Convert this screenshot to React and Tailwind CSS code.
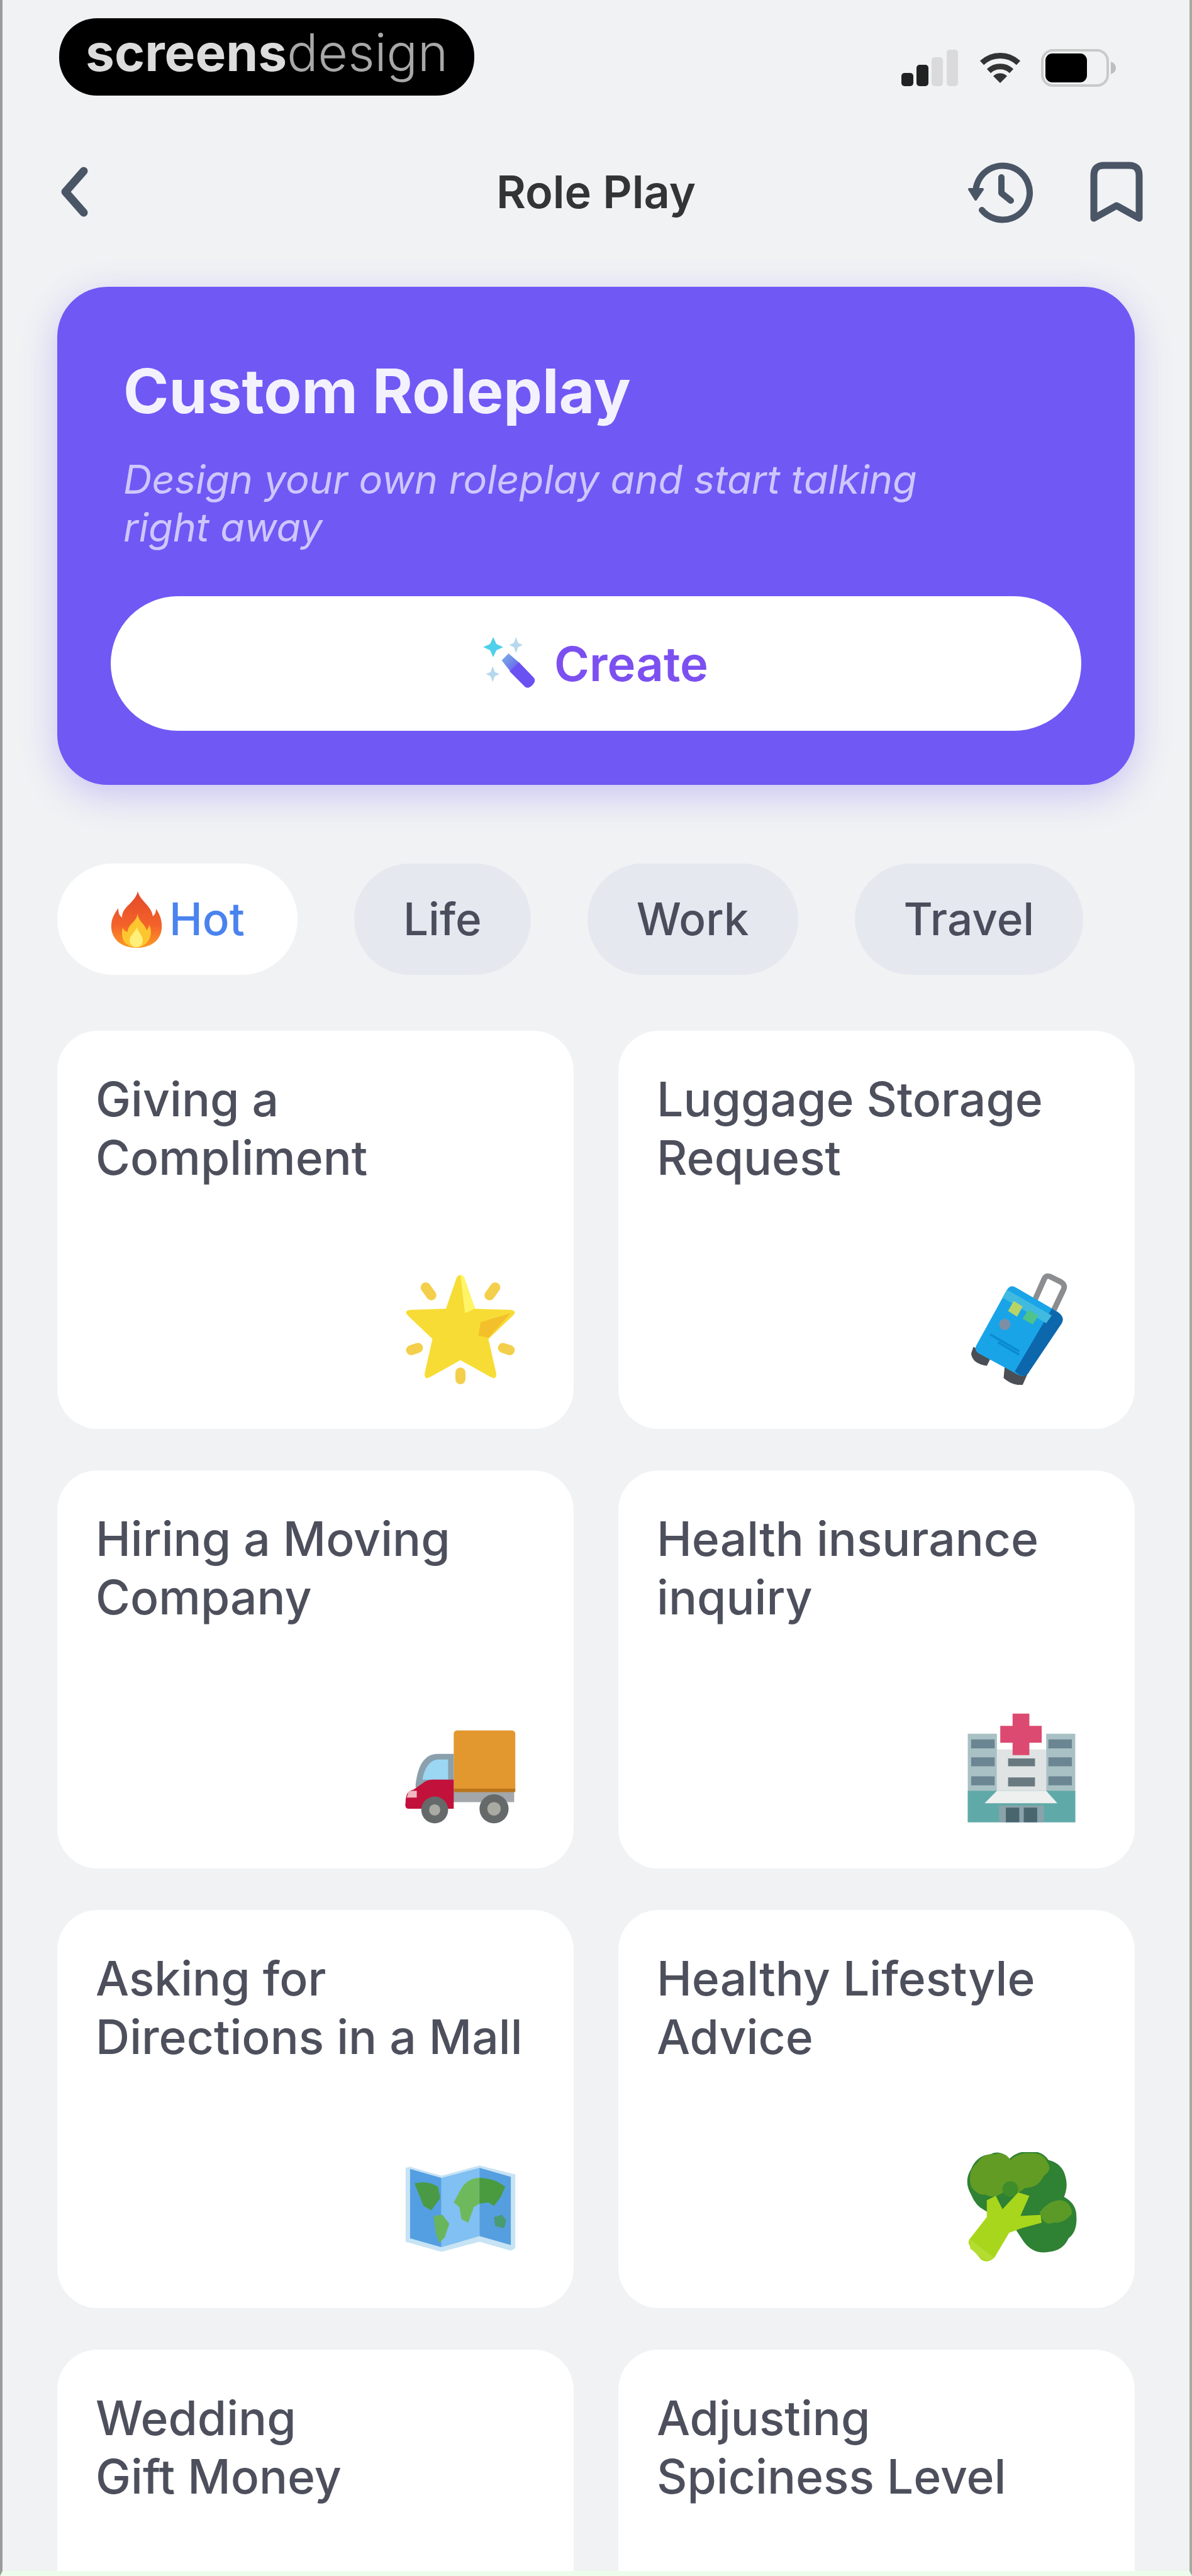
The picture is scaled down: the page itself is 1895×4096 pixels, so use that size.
const INK = "#4a5566";

function BackIcon() {
  return (
    <svg viewBox="0 0 46 84" className="h-[84px] w-[46px]" fill="none" stroke={INK} strokeWidth="13" strokeLinecap="round" strokeLinejoin="round" aria-hidden="true">
      <path d="M38 9 9 42l29 33" />
    </svg>
  );
}

function HistoryIcon() {
  return (
    <svg viewBox="0 0 104 104" className="size-[104px]" fill="none" stroke={INK} strokeWidth="10" strokeLinecap="round" strokeLinejoin="round" aria-hidden="true">
      <path d="M13 53a43 43 0 1 1 10 28" />
      <path d="M54 29v25l15 12" />
      <path d="M3 48h21L13 64z" fill={INK} strokeWidth="4" />
    </svg>
  );
}

function BookmarkIcon() {
  return (
    <svg viewBox="0 0 86 98" className="h-[98px] w-[86px]" fill="none" stroke={INK} strokeWidth="11" strokeLinejoin="round" strokeLinecap="round" aria-hidden="true">
      <path d="M7 91V23Q7 7 23 7h40q16 0 16 16v68L43 71z" />
    </svg>
  );
}

function StatusIcons() {
  return (
    <div className="flex items-center gap-8" aria-hidden="true">
      <svg viewBox="0 0 94 60" className="h-[60px] w-[94px]">
        <rect x="2" y="38" width="19" height="21" rx="5" fill="#222" />
        <rect x="26" y="25" width="19" height="34" rx="5" fill="#222" />
        <rect x="50" y="13" width="18" height="46" rx="5" fill="#d9dad9" />
        <rect x="74" y="1" width="18" height="58" rx="5" fill="#d9dad9" />
      </svg>
      <svg viewBox="0 0 66 52" className="h-[52px] w-[66px]" fill="none" stroke="#333" strokeWidth="9">
        <path d="M4 18a42 42 0 0 1 58 0" />
        <path d="M15 31a26 26 0 0 1 36 0" />
        <path d="M33 50 22 39a16 16 0 0 1 22 0z" fill="#333" stroke="none" />
      </svg>
      <svg viewBox="0 0 120 60" className="h-[60px] w-[120px]">
        <rect x="2" y="2" width="104" height="56" rx="17" fill="none" stroke="#c9cac9" strokeWidth="4" />
        <rect x="7" y="7" width="66" height="46" rx="11" fill="#000" />
        <path d="M111 20q8 3 8 10t-8 10z" fill="#bdbebd" />
      </svg>
    </div>
  );
}

function WandIcon() {
  return (
    <svg viewBox="0 0 100 100" className="size-[84px]" aria-hidden="true">
      <defs>
        <linearGradient id="wand" x1="0" y1="0" x2="1" y2="1">
          <stop offset="0" stopColor="#7fb6e6" />
          <stop offset=".5" stopColor="#6f86ea" />
          <stop offset="1" stopColor="#6a4cf2" />
        </linearGradient>
      </defs>
      <path d="m34 44 13-13 22 19-17 17z" fill="url(#wand)" />
      <path d="m49 65 18-17 28 29q5 6-3 14t-14 3z" fill="#6a52f2" />
      <path d="m18 0 6 13 13 6-13 6-6 13-6-13-13-6 13-6z" fill="#4fd0ea" />
      <path d="m61 0 4 11 9 4-9 4-4 11-4-11-9-4 9-4z" fill="#b5d8ec" />
      <path d="m17 55 4 11 9 4-9 4-4 11-4-11-9-4 9-4z" fill="#b5d8ec" />
    </svg>
  );
}

function FireIcon() {
  return (
    <svg viewBox="0 0 84 92" className="h-[92px] w-[84px]" aria-hidden="true">
      <defs>
        <linearGradient id="flame" x1="0" y1="0" x2="0" y2="1">
          <stop offset="0" stopColor="#e2492a" />
          <stop offset=".6" stopColor="#f4622a" />
          <stop offset="1" stopColor="#fb9a26" />
        </linearGradient>
      </defs>
      <path d="M44 1c3 15 22 23 24 40 4-3 5-7 5-12 7 10 10 20 9 32C80 80 64 91 42 91S4 80 2 60C1 47 6 38 13 28c0 8 2 12 6 15C19 25 40 20 44 1z" fill="url(#flame)" />
      <path d="M44 36c0 13 12 17 14 27 3-3 4-6 4-9 8 15-1 36-20 36S16 76 20 59c2 4 4 6 8 7 0-13 14-15 16-30z" fill="#fdc62f" />
      <path d="M43 58c1 8 9 13 9 21 0 7-4 11-10 11s-11-4-11-11 8-12 12-21z" fill="#fff07a" />
    </svg>
  );
}

function StarArt() {
  return (
    <>
      <path d="M50 2q3 0 4 4l9 26 32 1q6 1 2 5L75 59l7 31q0 6-5 3L50 78 23 93q-5 3-5-3l7-31L3 38q-4-4 2-5l32-1 9-26q1-4 4-4z" fill="#f7dc35" />
      <path d="M50 2q3 0 4 4l9 26-9 4z" fill="#fff566" />
      <path d="m68 44 27-8-20 22-9-2z" fill="#f3c02b" />
      <g stroke="#f4cf4b" strokeWidth="9" strokeLinecap="round">
        <path d="m19 13 5 7M81 13l-5 7M6 69l6-2M94 69l-6-2M50 89v6" />
      </g>
    </>
  );
}

function LuggageArt() {
  return (
    <>
      <path d="m62 24 8-18q2-5 7-2l8 4q5 3 2 8l-10 21" fill="none" stroke="#8b8d90" strokeWidth="5" />
      <path d="m7 66 16 9-4 8q-13-2-14-11zM35 83l20 8-4 9q-9 1-17-6z" fill="#4b4f55" />
      <path d="M37 15q3-5 8-2l36 21q7 4 4 10L56 88q-3 6-9 3L12 72q-5-3-2-8z" fill="#1aa4e8" />
      <path d="m77 32 5 3q7 4 4 10L57 88q-3 6-9 3l-4-3z" fill="#0d67ac" />
      <path d="m37 15 40 23-5 7-39-23z" fill="#40badf" />
      <path d="m43 25 8 5-5 9-8-5z" fill="#b9d466" />
      <path d="m56 33 9 5-5 8-9-5z" fill="#4fc389" />
      <circle cx="35" cy="46" r="5" fill="#7d8fa5" />
      <path d="m22 55 26 15M29 62l19 11" stroke="#0a8bd0" strokeWidth="2" />
    </>
  );
}

function TruckArt() {
  return (
    <>
      <path d="M42 70h56v10H42z" fill="#a3a6aa" />
      <rect x="44" y="16" width="55" height="55" rx="3" fill="#e3972f" />
      <path d="M44 68h55v3H44z" fill="#b9751f" />
      <path d="M10 64q2-17 9-23 4-4 11-4h14v30H10z" fill="#8aa0ac" />
      <path d="M16 60q2-11 7-15 3-3 8-3h8v18z" fill="#9bd7f2" />
      <path d="M18 62q3-2 7-2h19v26H3q-3-1-2-6 0-10 7-11z" fill="#c2113b" />
      <path d="M4 70h7v6H2z" fill="#f0b9c2" />
      <g fill="#66696a">
        <circle cx="27" cy="87" r="12" />
        <circle cx="80" cy="86" r="13" />
      </g>
      <g fill="#a9aba3">
        <circle cx="27" cy="87" r="5" />
        <circle cx="80" cy="86" r="6" />
      </g>
    </>
  );
}

function HospitalArt() {
  return (
    <>
      <path d="M2 19h26v79H2zM72 19h26v79H72z" fill="#a9c0c4" />
      <path d="M28 33h44v65H28z" fill="#dfe3e3" />
      <path d="M2 70h96v28H2z" fill="#5faaa8" />
      <path d="M5 24h21v8H5zM5 40h21v8H5zM5 57h21v8H5zM74 24h21v8H74zM74 40h21v8H74zM74 57h21v8H74z" fill="#6b8593" />
      <path d="M38 41h24v7H38zM38 58h24v8H38z" fill="#687a80" />
      <path d="M28 70h44l10 11H17z" fill="#eef0ef" />
      <path d="M30 83h40v15H30z" fill="#8aa3aa" />
      <path d="M36 85h12v13H36zM52 85h12v13H52z" fill="#49666f" />
      <path d="M42 1h15v11h11v15H57v11H42V27H31V12h11z" fill="#dd4a71" />
    </>
  );
}

function MapArt() {
  return (
    <>
      <path d="m1 14 4-1 28 8 34-9 32 8v66l-4 2-28-8-34 9-32-9z" fill="#c7e3f4" />
      <path d="m5 15 28 8v62L5 77z" fill="#549fe2" />
      <path d="m33 23 34-9v61l-34 10z" fill="#80c0f2" />
      <path d="m67 14 28 8v61l-28-8z" fill="#559fe0" />
      <path d="M9 28q12-3 21 3l2 10-8 11-7-4z" fill="#4a9a45" />
      <path d="m26 57 8-1 6 8-4 12-5 5-3-9z" fill="#68b55c" />
      <path d="M51 32q6-9 16-9v23l-5 3-5 14-6-3-2-11-5-4z" fill="#6fb95d" />
      <path d="M67 23q13 0 23 8l-4 9-6 8-5-3-8 1z" fill="#4a9a40" />
      <path d="m80 58 7-2 4 5-2 7-8-2z" fill="#4a9a72" />
    </>
  );
}

function BroccoliArt() {
  return (
    <>
      <path d="M5 38Q-2 26 5 15 10 3 22 2q9-5 17 4 9-8 18-6 11-2 17 7 12 3 15 14 3 9-1 19 11 6 11 17 1 14-7 20-5 11-17 12-14 3-23-9l-8-12-27-16Q9 48 5 38z" fill="#2f8133" />
      <path d="M5 31Q1 17 11 9q5-8 15-7 9-3 14 5 8-7 17-6 12-1 16 8 5 7-3 12-5 11-17 11-8 8-17 2-10 9-18 4-7 1-13-7z" fill="#629c24" />
      <path d="M66 54q9-12 20-11 9 3 9 12-7 9-17 8-8 4-12-9z" fill="#5b9a27" />
      <circle cx="40" cy="33" r="7" fill="#3f8c2b" />
      <path d="m19 43 8-4 6 12 14-15 10 3-8 18 18-1 1 7-18 5-11 4-13 22q-6 6-12 2L4 84q-3-4 1-8l14-18z" fill="#a8d61c" />
      <path d="m4 78 21 16q-5 5-10 1L4 86z" fill="#b5dc30" />
    </>
  );
}

function EmojiArt({ children }) {
  return (
    <svg viewBox="0 0 100 100" className="size-[178px] self-end" aria-hidden="true">
      {children}
    </svg>
  );
}

const tabs = [
  { label: "Hot", active: true },
  { label: "Life" },
  { label: "Work" },
  { label: "Travel" },
];

const scenarios = [
  { lines: ["Giving a", "Compliment"], art: <StarArt /> },
  { lines: ["Luggage Storage", "Request"], art: <LuggageArt /> },
  { lines: ["Hiring a Moving", "Company"], art: <TruckArt /> },
  { lines: ["Health insurance", "inquiry"], art: <HospitalArt /> },
  { lines: ["Asking for", "Directions in a Mall"], art: <MapArt /> },
  { lines: ["Healthy Lifestyle", "Advice"], art: <BroccoliArt /> },
  { lines: ["Wedding", "Gift Money"], art: null },
  { lines: ["Adjusting", "Spiciness Level"], art: null },
];

function ScenarioCard({ lines, art }) {
  return (
    <button type="button" className="flex min-h-[633px] flex-col justify-between rounded-[64px] bg-white pt-[62px] pr-[91px] pb-[70px] pl-[61px] text-left text-[75px] leading-[93px] font-medium whitespace-nowrap text-[#4d505c]">
      <span className="w-0">
        {lines[0]}
        <br />
        {lines[1]}
      </span>
      {art && <EmojiArt>{art}</EmojiArt>}
    </button>
  );
}

export default function App() {
  return (
    <div className="flex h-screen flex-col overflow-hidden border-r-4 border-b-8 border-l-4 border-r-[#a3aba1] border-b-[#edfdec] border-l-[#9b9c9c] bg-[#f0f2f4] font-['Inter',sans-serif]">
      <div className="flex shrink-0 items-end justify-between pt-[29px] pr-[116px] pl-[90px]">
        <div className="flex h-[123px] items-center rounded-[60px] bg-black px-[42px] pb-[14px] text-[82px] leading-none text-[#dcdcdc]">
          <span className="font-bold">screens</span>
          <span className="font-light text-[#a8a8a8]">design</span>
        </div>
        <div className="pb-[14px]">
          <StatusIcons />
        </div>
      </div>

      <header className="mt-[101px] grid shrink-0 grid-cols-[1fr_auto_1fr] items-center px-[73px]">
        <button type="button" aria-label="Back" className="ml-[18px] justify-self-start">
          <BackIcon />
        </button>
        <h1 className="text-[72px] leading-[104px] font-semibold text-[#333436]">Role Play</h1>
        <div className="flex items-center gap-[90px] justify-self-end">
          <button type="button" aria-label="History">
            <HistoryIcon />
          </button>
          <button type="button" aria-label="Bookmarks">
            <BookmarkIcon />
          </button>
        </div>
      </header>

      <main className="flex min-h-0 flex-1 flex-col overflow-hidden px-[87px] pt-[99px]">
        <section className="shrink-0 rounded-[80px] bg-[#7058f5] px-[85px] pt-[106px] pb-[86px] shadow-[0_16px_56px_rgba(112,88,245,0.3)]">
          <h2 className="pl-[20px] text-[98px] leading-[120px] font-bold text-[#f4f1ff]">Custom Roleplay</h2>
          <p className="mt-[42px] pl-[20px] text-[63px] leading-[76px] text-[#cfc6fd] italic">
            Design your own roleplay and start talking
            <br />
            right away
          </p>
          <button type="button" className="mt-[72px] flex h-[214px] w-full items-center justify-center gap-[28px] rounded-full bg-white text-[76px] leading-none font-semibold text-[#7c50f0]">
            <WandIcon />
            Create
          </button>
        </section>

        <nav aria-label="Categories" className="mt-[125px] flex shrink-0 gap-[90px]">
          {tabs.map(({ label, active }) => (
            <button
              key={label}
              type="button"
              aria-pressed={Boolean(active)}
              className={
                active
                  ? "flex h-[177px] items-center gap-[10px] rounded-full bg-white px-[84px] text-[71px] leading-none font-medium text-[#4a83ee]"
                  : "flex h-[177px] items-center rounded-full bg-[#e5e8ef] px-[78px] text-[71px] leading-none font-medium text-[#4a4e5c]"
              }
            >
              {active && <FireIcon />}
              {label}
            </button>
          ))}
        </nav>

        <div className="mt-[89px] grid shrink-0 grid-cols-2 gap-x-[71px] gap-y-[66px]">
          {scenarios.map((scenario) => (
            <ScenarioCard key={scenario.lines[0]} {...scenario} />
          ))}
        </div>
      </main>
    </div>
  );
}
